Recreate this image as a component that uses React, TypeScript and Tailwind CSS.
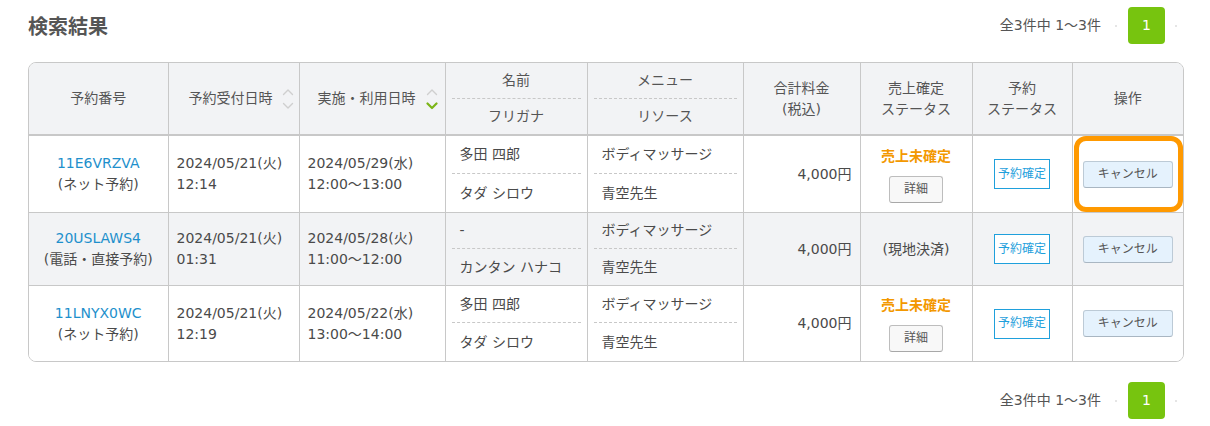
import React from "react";

const font = { fontFamily: '"DejaVu Sans", "Noto Sans CJK JP", sans-serif' };

function SortIcon({ active }: { active?: boolean }) {
  return (
    <svg width="12" height="22" viewBox="0 0 12 22" className="shrink-0">
      <polyline points="1.5,6.5 6,2 10.5,6.5" fill="none" stroke="#cfcfcf" strokeWidth="1.4" strokeLinecap="round" strokeLinejoin="round" />
      <polyline
        points="1.5,15.5 6,20 10.5,15.5"
        fill="none"
        stroke={active ? "#7cb518" : "#cfcfcf"}
        strokeWidth={active ? 2.2 : 1.4}
        strokeLinecap="round"
        strokeLinejoin="round"
      />
    </svg>
  );
}

function Pager() {
  return (
    <div className="flex items-center text-[14px] text-[#555]">
      <span>全3件中 1〜3件</span>
      <span className="ml-[14px] w-[2px] h-[2px] rounded-full bg-[#dcdcdc]" />
      <div className="ml-[11px] w-[37px] h-[37px] rounded-[4px] bg-[#77c40f] text-white flex items-center justify-center text-[14px]">
        1
      </div>
      <span className="ml-[10px] w-[2px] h-[2px] rounded-full bg-[#dcdcdc]" />
      <span className="w-[7px]" />
    </div>
  );
}

type Row = {
  id: string;
  kind: string;
  recv: [string, string];
  use: [string, string];
  name: string;
  kana: string;
  menu: string;
  res: string;
  sales: "unconfirmed" | "local";
  bg: string;
  h: [number, number];
  highlight?: boolean;
};

const rows: Row[] = [
  {
    id: "11E6VRZVA",
    kind: "(ネット予約)",
    recv: ["2024/05/21(火)", "12:14"],
    use: ["2024/05/29(水)", "12:00〜13:00"],
    name: "多田 四郎",
    kana: "タダ シロウ",
    menu: "ボディマッサージ",
    res: "青空先生",
    sales: "unconfirmed",
    bg: "bg-white",
    h: [38, 38],
    highlight: true,
  },
  {
    id: "20USLAWS4",
    kind: "(電話・直接予約)",
    recv: ["2024/05/21(火)", "01:31"],
    use: ["2024/05/28(火)", "11:00〜12:00"],
    name: "-",
    kana: "カンタン ハナコ",
    menu: "ボディマッサージ",
    res: "青空先生",
    sales: "local",
    bg: "bg-[#f2f3f5]",
    h: [36, 36],
  },
  {
    id: "11LNYX0WC",
    kind: "(ネット予約)",
    recv: ["2024/05/21(火)", "12:19"],
    use: ["2024/05/22(水)", "13:00〜14:00"],
    name: "多田 四郎",
    kana: "タダ シロウ",
    menu: "ボディマッサージ",
    res: "青空先生",
    sales: "unconfirmed",
    bg: "bg-white",
    h: [37, 38],
  },
];

export default function App() {
  const cellB = "border-r border-b border-[#c8c8c8]";
  return (
    <div style={font} className="w-[1210px] h-[426px] bg-white pl-[28px] pr-[26px] pt-[7px] text-[#4a4a4a]">
      <div className="flex items-center justify-between h-[37px]">
        <h1 className="text-[20px] font-bold text-[#555] leading-none mt-[3px]">検索結果</h1>
        <Pager />
      </div>

      <div className="mt-[18px] border border-[#c8c8c8] rounded-[8px] overflow-hidden">
        <table className="w-full table-fixed border-collapse text-[14px] leading-[21px]">
          <colgroup>
            <col style={{ width: 139 }} />
            <col style={{ width: 131 }} />
            <col style={{ width: 146 }} />
            <col style={{ width: 142 }} />
            <col style={{ width: 156 }} />
            <col style={{ width: 117 }} />
            <col style={{ width: 112 }} />
            <col style={{ width: 100 }} />
            <col style={{ width: 111 }} />
          </colgroup>
          <thead>
            <tr className="bg-[#f2f3f5] text-[#555] h-[71px]">
              <th className={`${cellB} border-b-2 font-normal text-center`}>予約番号</th>
              <th className={`${cellB} border-b-2 font-normal p-0`}>
                <div className="flex items-center pl-[20px]">
                  <span>予約受付日時</span>
                  <span className="ml-[9px] flex"><SortIcon /></span>
                </div>
              </th>
              <th className={`${cellB} border-b-2 font-normal p-0`}>
                <div className="flex items-center pl-[18px]">
                  <span>実施・利用日時</span>
                  <span className="ml-[10px] flex"><SortIcon active /></span>
                </div>
              </th>
              <th className={`${cellB} border-b-2 font-normal px-[6px] py-0`}>
                <div className="h-[36px] flex items-center justify-center border-b border-dashed border-[#c8c8c8]">名前</div>
                <div className="h-[35px] flex items-center justify-center">フリガナ</div>
              </th>
              <th className={`${cellB} border-b-2 font-normal px-[6px] py-0`}>
                <div className="h-[36px] flex items-center justify-center border-b border-dashed border-[#c8c8c8]">メニュー</div>
                <div className="h-[35px] flex items-center justify-center">リソース</div>
              </th>
              <th className={`${cellB} border-b-2 font-normal text-center`}>
                合計料金
                <br />
                (税込)
              </th>
              <th className={`${cellB} border-b-2 font-normal text-center`}>
                売上確定
                <br />
                ステータス
              </th>
              <th className={`${cellB} border-b-2 font-normal text-center`}>
                予約
                <br />
                ステータス
              </th>
              <th className="border-b-2 border-[#c8c8c8] font-normal text-center">操作</th>
            </tr>
          </thead>
          <tbody>
            {rows.map((r, i) => {
              const last = i === rows.length - 1;
              const b = last ? "border-r border-[#c8c8c8]" : cellB;
              return (
                <tr key={r.id} className={r.bg}>
                  <td className={`${b} text-center`}>
                    <div className="text-[#1e90cc]">{r.id}</div>
                    <div>{r.kind}</div>
                  </td>
                  <td className={`${b} pl-[8px]`}>
                    <div>{r.recv[0]}</div>
                    <div>{r.recv[1]}</div>
                  </td>
                  <td className={`${b} pl-[8px]`}>
                    <div>{r.use[0]}</div>
                    <div>{r.use[1]}</div>
                  </td>
                  <td className={`${b} px-[6px] py-0`}>
                    <div style={{ height: r.h[0] }} className="flex items-center pl-[8px] border-b border-dashed border-[#c8c8c8]">
                      {r.name}
                    </div>
                    <div style={{ height: r.h[1] }} className="flex items-center pl-[8px]">
                      {r.kana}
                    </div>
                  </td>
                  <td className={`${b} px-[6px] py-0`}>
                    <div style={{ height: r.h[0] }} className="flex items-center pl-[8px] border-b border-dashed border-[#c8c8c8]">
                      {r.menu}
                    </div>
                    <div style={{ height: r.h[1] }} className="flex items-center pl-[8px]">
                      {r.res}
                    </div>
                  </td>
                  <td className={`${b} text-right pr-[8px]`}>4,000円</td>
                  <td className={`${b} text-center`}>
                    {r.sales === "unconfirmed" ? (
                      <div className="flex flex-col items-center">
                        <div className="text-[#f39800] font-bold">売上未確定</div>
                        <div className="mt-[9px] w-[54px] h-[27px] rounded-[3px] border border-[#bdbdbd] border-b-[#a8a8a8] bg-[#f8f8f8] text-[12px] text-[#555] flex items-center justify-center">
                          詳細
                        </div>
                      </div>
                    ) : (
                      <span>(現地決済)</span>
                    )}
                  </td>
                  <td className={`${b} text-center`}>
                    <div className="inline-flex w-[56px] h-[30px] items-center justify-center border border-[#1fa0dc] text-[#1fa0dc] text-[12px] bg-white">
                      予約確定
                    </div>
                  </td>
                  <td className={`${last ? "" : "border-b border-[#c8c8c8]"} text-center relative`}>
                    <div className="inline-flex w-[90px] h-[27px] items-center justify-center rounded-[3px] border border-[#bccad6] border-b-[#a9b6c2] bg-[#e5f2fd] text-[12px] text-[#555]">
                      キャンセル
                    </div>
                    {r.highlight && (
                      <div className="absolute left-[1px] right-0 top-0 bottom-0 border-[5px] border-[#ff9900] rounded-[12px]" />
                    )}
                  </td>
                </tr>
              );
            })}
          </tbody>
        </table>
      </div>

      <div className="mt-[20px] flex justify-end">
        <Pager />
      </div>
    </div>
  );
}
